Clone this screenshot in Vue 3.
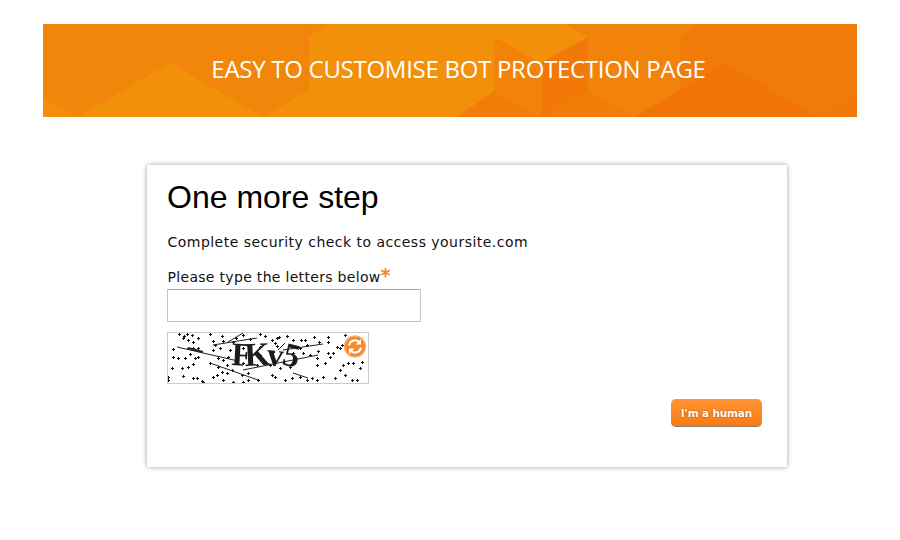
<script setup>
const zoomDots = [
  [58,28],[72,32],[82,26],[95,30],[70,38],[85,45],[100,50],[115,38],[150,28],[160,48],[185,32],[190,48],[165,60],[220,50],[228,38],[250,30],[270,42],[300,28],[315,32],[335,45],[350,40],[358,35],[345,55],[380,32],[400,45],[422,45],[435,45],[462,35],[478,50],[503,35],[505,50],[555,30],[545,60],[530,65],
  [38,72],[85,70],[100,70],[115,70],[160,75],[180,70],[210,75],[250,70],[300,65],[350,62],[390,60],[420,70],[440,60],[475,78],[520,85],[540,70],
  [40,95],[55,98],[75,98],[90,88],[105,100],[115,95],[175,100],[190,105],[205,95],[300,90],[340,80],[400,85],[430,85],[450,90],[510,95],[505,85],[470,100],
  [100,118],[85,125],[150,115],[175,125],[200,120],[250,115],[290,120],[330,120],[360,130],[390,125],[470,120],[495,115],[550,120],[565,115],[580,115],[605,110],[540,135],[600,130],
  [35,130],[65,130],[25,155],[70,152],[110,160],[125,168],[100,160],[160,155],[170,150],[185,140],[200,145],[215,135],[245,150],[265,145],[265,165],[250,170],[335,150],[345,155],[375,165],[395,160],[420,155],[440,165],[455,160],[470,165],[490,155],[525,160],[555,150],[575,165],[590,165],[25,165],[130,172],[190,165],[220,170],[295,165]
]
const dotPath = zoomDots
  .map(([x, y]) => {
    const px = Math.round(x / 3 - 8) + 0.5
    const py = Math.round(y / 3 - 8) + 0.5
    return `M${px - 1.5} ${py}h3M${px} ${py - 1.5}v3`
  })
  .join('')
</script>

<template>
  <div class="page">
    <header class="banner">
      <svg class="art" viewBox="0 0 814 93" preserveAspectRatio="none" aria-hidden="true">
        <defs>
          <linearGradient id="base" x1="0" x2="1" y1="0" y2="0">
            <stop offset="0" stop-color="#f1870a" />
            <stop offset="0.5" stop-color="#f1850a" />
            <stop offset="1" stop-color="#f17a08" />
          </linearGradient>
        </defs>
        <rect width="814" height="93" fill="url(#base)" />
        <polygon points="0,74 34,93 0,93" fill="#f28e0b" />
        <polygon points="127,39 35,93 220,93" fill="#f3900a" />
        <polygon points="266,13 285,0 522,0 545,13 545,93 220,93 266,66" fill="#f3900a" />
        <polygon points="451,13 498,39 498,93 451,67" fill="#f18408" />
        <polygon points="451,67 498,93 414,93" fill="#f27c08" />
        <polygon points="522,0 657,0 637,13 637,93 504,93 545,68 545,13" fill="#f1820a" />
        <polygon points="498,39 545,13 545,68 504,93 498,93" fill="#f27808" />
        <polygon points="545,68 589,93 504,93" fill="#f27c08" />
        <polygon points="657,0 814,0 814,93 637,93 637,13" fill="#f17b08" />
        <polygon points="682,39 592,93 774,93" fill="#f27408" />
        <polygon points="814,71 777,93 814,93" fill="#f27608" />
      </svg>
      <h2 class="banner-title">EASY TO CUSTOMISE BOT PROTECTION PAGE</h2>
    </header>

    <main class="card">
      <h1 class="title">One more step</h1>
      <p class="intro">Complete security check to access yoursite.com</p>
      <label class="label" for="captcha">Please type the letters below<span class="req">*</span></label>
      <input id="captcha" class="field" type="text" />
      <div class="captcha">
        <svg width="200" height="50" viewBox="0 0 200 50" aria-label="captcha image">
          <path :d="dotPath" stroke="#111" stroke-width="1" fill="none" />
          <g stroke="#222" fill="none">
            <path d="M9 14 L70 28 M45 12 L89 5 M75 37 L150 22 M115 17 L155 11 M42 30 L90 47 M125 40 L140 45 M110 17 L117 10 M60 9 L75 0" stroke-width="1" />
            <path d="M20 15 L35 19" stroke-width="2" />
          </g>
          <g class="glyphs" fill="#1c1c1c">
            <text x="63" y="32" transform="rotate(3 63 32)">F</text>
            <text x="77" y="33" transform="rotate(-3 77 33)">K</text>
            <text x="98" y="32" transform="rotate(6 98 32)">v</text>
            <text x="113" y="31" transform="rotate(14 113 31)">5</text>
          </g>
          <g class="reload">
            <circle cx="187" cy="13.500" r="11" fill="#f58a2c" />
            <circle cx="187" cy="13.500" r="10.500" fill="none" stroke="#fbbf8a" stroke-width="1" />
            <path d="M181 12.500a6 6 0 0 1 10-3.500M193 14.500a6 6 0 0 1-10 3.500" fill="none" stroke="#fff" stroke-width="2" />
            <path d="M193 6v5.500h-5.500zM181 21v-5.500h5.500z" fill="#fff" />
          </g>
        </svg>
      </div>
      <div class="actions">
        <button class="human" type="button">I'm a human</button>
      </div>
    </main>
  </div>
</template>

<style>
html,
body {
  background: #fff;
}
</style>

<style scoped>
.page {
  width: 900px;
  height: 540px;
  box-sizing: border-box;
  padding: 24px 43px 0;
  overflow: hidden;
}
.banner {
  position: relative;
  height: 93px;
  display: flex;
  align-items: center;
  justify-content: center;
  overflow: hidden;
}
.art {
  position: absolute;
  inset: 0;
  width: 100%;
  height: 100%;
}
.banner-title {
  position: relative;
  margin: 0 0 4px 17px;
  font: 400 24px "Open Sans", sans-serif;
  letter-spacing: -0.28px;
  color: #fff;
}
.card {
  width: 640px;
  height: 302px;
  box-sizing: border-box;
  margin: 48px 0 0 104px;
  padding: 14px 25px 0 20px;
  background: #fff;
  box-shadow: 0 0 5px rgba(0, 0, 0, 0.4);
  font: 14px "DejaVu Sans", Verdana, sans-serif;
  color: #111;
}
.title {
  margin: 0;
  font: 400 32px/36px "Liberation Sans", Arial, sans-serif;
  color: #000;
}
.intro {
  margin: 17px 0 0 0.5px;
  line-height: 20px;
  letter-spacing: 0.47px;
}
.label {
  display: block;
  margin: 15px 0 0 0.5px;
  line-height: 20px;
  letter-spacing: 0.31px;
}
.req {
  color: #f58220;
  font-size: 19px;
  font-weight: 700;
  line-height: 0;
}
.field {
  display: block;
  width: 254px;
  height: 33px;
  box-sizing: border-box;
  margin: 2px 0 0;
  padding: 0 6px;
  background: #fff;
  border: 1px solid #c4c4c4;
  border-top-color: #a8a8a8;
  outline: none;
}
.captcha {
  width: 202px;
  height: 52px;
  box-sizing: border-box;
  margin-top: 10px;
  border: 1px solid #ccc;
}
.captcha svg {
  display: block;
}
.glyphs {
  font: 700 33px "Liberation Serif", serif;
  filter: blur(0.4px);
}
.reload {
  filter: blur(0.4px);
}
.actions {
  display: flex;
  justify-content: flex-end;
  margin-top: 15px;
}
.human {
  width: 91px;
  height: 28px;
  padding: 0;
  border: 0;
  border-bottom: 1px solid #8a8078;
  border-radius: 5px;
  background: linear-gradient(#ff9638, #fb7a12);
  color: #fff;
  font: 700 10.500px "DejaVu Sans", Verdana, sans-serif;
  letter-spacing: -0.15px;
  text-shadow: 0 0 2px rgba(120, 50, 0, 0.7);
}
</style>
